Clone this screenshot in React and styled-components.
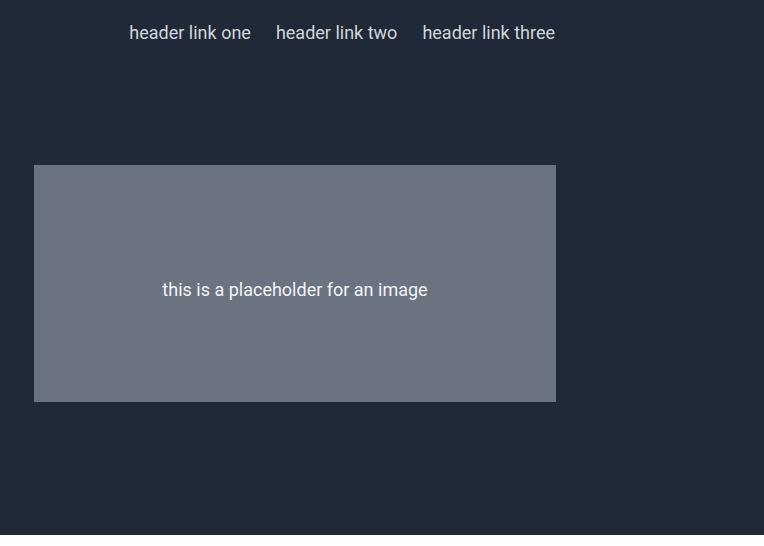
import React from 'react';
import styled, { createGlobalStyle } from 'styled-components';

const GlobalStyle = createGlobalStyle`
  html, body {
    margin: 0;
    padding: 0;
    background: #ffffff;
  }
  body {
    font-family: Roboto, "Liberation Sans", sans-serif;
  }
`;

const Page = styled.div`
  height: 535px;
  background-color: #1f2937;
  display: flex;
  flex-direction: column;
  padding: 0 34px;
  box-sizing: border-box;
`;

const Header = styled.nav`
  width: 521px;
  display: flex;
  justify-content: flex-end;
  gap: 25px;
  padding-top: 22px;
`;

const HeaderLink = styled.a`
  color: #d1d5db;
  font-size: 18px;
  line-height: 21px;
  text-decoration: none;
  cursor: pointer;
`;

const Placeholder = styled.div`
  margin-top: 122px;
  width: 522px;
  height: 237px;
  background-color: #6b7280;
  display: flex;
  align-items: center;
  justify-content: center;
  padding-top: 11px;
  box-sizing: border-box;
  color: #f3f4f6;
  font-size: 18px;
`;

const links = ['header link one', 'header link two', 'header link three'];

const App = () => {
  return (
    <>
      <GlobalStyle />
      <Page>
        <Header>
          {links.map(l => (
            <HeaderLink key={l}>{l}</HeaderLink>
          ))}
        </Header>
        <Placeholder>this is a placeholder for an image</Placeholder>
      </Page>
    </>
  );
};

export default App;
